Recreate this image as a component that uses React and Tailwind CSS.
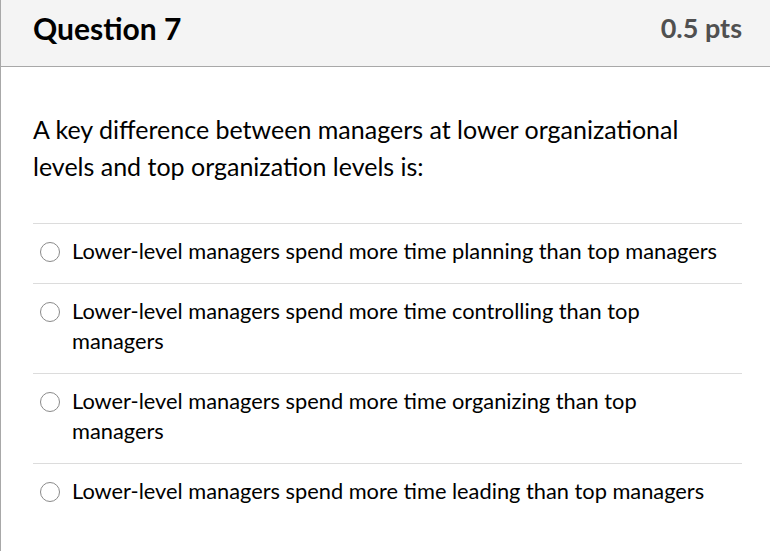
import React from "react";

const options = [
  "Lower-level managers spend more time planning than top managers",
  "Lower-level managers spend more time controlling than top managers",
  "Lower-level managers spend more time organizing than top managers",
  "Lower-level managers spend more time leading than top managers",
];

export default function App() {
  return (
    <div
      className="w-[770px] h-[551px] bg-white border-l border-[#a8a8a8] overflow-hidden text-[#2d3b45]"
      style={{ fontFamily: "Lato, 'Noto Sans', sans-serif" }}
    >
      <div className="h-[67px] bg-[#f4f4f4] border-b border-[#a8a8a8] flex items-start justify-between pt-[13px] pl-[32px] pr-[28px]">
        <div className="text-[30px] font-bold text-black leading-[30px]">Question 7</div>
        <div className="text-[27px] font-bold text-[#505050] leading-[30px]">0.5 pts</div>
      </div>
      <div className="pl-[32px] pr-[28px]">
        <div className="pt-[44px] pb-[38px] text-[25px] leading-[37px] text-black">
          A key difference between managers at lower organizational
          <br />
          levels and top organization levels is:
        </div>
        <div>
          {options.map((o, i) => (
            <div key={i} className="border-t border-[#dcdcdc] flex items-start pt-[12px] pb-[17px] pl-[7px] pr-[16px]">
              <span className="mt-[6px] w-[20px] h-[20px] rounded-full border border-[#8a8a8a] bg-white shrink-0" />
              <span className="ml-[12px] text-[21.8px] leading-[30px] text-black">{o}</span>
            </div>
          ))}
        </div>
      </div>
    </div>
  );
}
